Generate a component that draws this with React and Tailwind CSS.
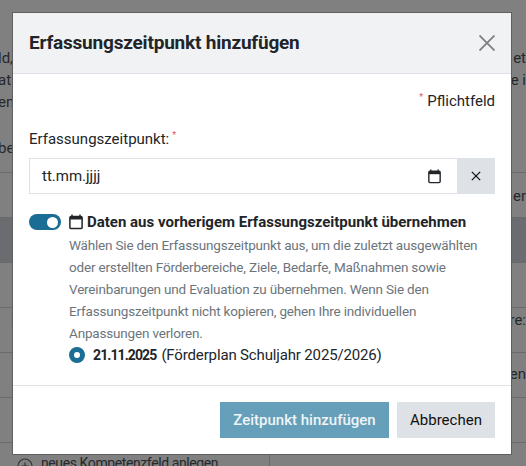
const CalendarIcon = ({ className }) => (
  <svg viewBox="0 0 14 16" className={className} fill="none">
    <path d="M3 0.5v2M11 0.5v2" stroke="#212529" strokeWidth="1.4" />
    <rect x="0.9" y="2.4" width="12.2" height="12.2" rx="1.2" stroke="#212529" strokeWidth="1.5" />
    <rect x="1" y="2.5" width="12" height="3" fill="#212529" />
  </svg>
);

// Seite hinter dem Dialog
const Background = () => (
  <div className="h-[466px] w-[526px] overflow-hidden bg-[#808080] text-[15px] leading-[22px] text-[#26282b]">
    <div className="h-[173px] border-b border-[#6a6a6a]">
      <div className="flex justify-between pt-[47px]">
        <div className="-ml-[2px]">ld,<br />at<br />en</div>
        <div className="text-right">et<br />e i</div>
      </div>
      <div className="-ml-[2px] pt-[24px]">be</div>
    </div>
    <div className="flex h-[45px] justify-end border-b border-[#6a6a6a] pt-[12px]">
      <span>er</span>
    </div>
    <div className="h-[45px] border-b border-[#6a6a6a] bg-[#6b6c6f]" />
    <div className="h-[45px] border-b border-[#6a6a6a]" />
    <div className="flex h-[45px] justify-between border-b border-[#6a6a6a] pt-[1px]">
      <span className="pl-[11px]">l</span>
      <span>re:</span>
    </div>
    <div className="flex h-[45px] justify-end border-b border-[#6a6a6a] pt-[10px]">gen</div>
    <div className="h-[45px] border-b border-[#6a6a6a]" />
    <div className="flex h-[24px] w-[270px] items-start gap-2 border-r border-[#6a6a6a] pl-[17px] pt-[9px] text-[14px] tracking-[-0.4px]">
      <svg viewBox="0 0 16 16" className="mt-[6px] h-4 w-4 shrink-0" fill="none" stroke="#333" strokeWidth="1.2">
        <circle cx="8" cy="8" r="7" />
        <path d="M8 4.5v7M4.5 8h7" />
      </svg>
      <span>neues Kompetenzfeld anlegen</span>
    </div>
  </div>
);

export default function App() {
  return (
    <div className="relative h-[466px] w-[526px] overflow-hidden font-['Roboto',sans-serif]">
      <Background />

      {/* Dialog */}
      <div className="absolute left-[13px] top-[13px] flex h-[441px] w-[498px] flex-col bg-white shadow-[0_0_0_1px_#5f5f5f]">
        <div className="flex h-[61px] shrink-0 items-center justify-between border-b border-[#dee2e6] bg-[#f1f2f4] pl-4 pr-[15px]">
          <h2 className="text-[19px] font-bold tracking-[-0.2px] text-[#212529]">Erfassungszeitpunkt hinzufügen</h2>
          <svg viewBox="0 0 16 16" className="h-4 w-4 mr-[1px]" fill="none" stroke="#7f7f7f" strokeWidth="1.8">
            <path d="M0.5 0.5l15 15M15.5 0.5l-15 15" />
          </svg>
        </div>

        <div className="flex flex-1 flex-col px-4 pt-[16px]">
          <div className="flex justify-end gap-[4px] text-[15px] leading-[22px] text-[#212529]">
            <span className="text-[9px] leading-[14px] text-[#e0566a]">*</span>
            <span>Pflichtfeld</span>
          </div>

          <label className="mt-[16px] flex gap-[3px] text-[15px] leading-[22px] text-[#212529]">
            <span>Erfassungszeitpunkt:</span>
            <span className="text-[9px] leading-[14px] text-[#e0566a]">*</span>
          </label>

          <div className="mt-[8px] flex h-[36px]">
            <div className="flex flex-1 items-center justify-between border border-r-0 border-[#dee2e6] pl-3 pr-[16px] text-[15px] text-[#212529]">
              <span>tt.mm.jjjj</span>
              <CalendarIcon className="h-[15px] w-[13px]" />
            </div>
            <button className="flex w-[38px] items-center justify-center bg-[#dee2e6]">
              <svg viewBox="0 0 12 12" className="h-[10px] w-[10px]" fill="none" stroke="#111" strokeWidth="1.5">
                <path d="M1 1l10 10M11 1L1 11" />
              </svg>
            </button>
          </div>

          <div className="mt-[19px] flex items-start gap-2">
            <div className="mt-px flex h-4 w-8 shrink-0 items-center justify-end rounded-full bg-[#1a6e96] pr-[3px]">
              <div className="h-[11px] w-[11px] rounded-full bg-white" />
            </div>
            <div className="min-w-0">
              <div className="flex items-center gap-[4px] text-[15px] font-bold leading-[18px] text-[#212529]">
                <CalendarIcon className="h-4 w-[14px]" />
                <span>Daten aus vorherigem Erfassungszeitpunkt übernehmen</span>
              </div>
              <p className="mt-[3px] whitespace-nowrap text-[13.5px] leading-[22px] tracking-[-0.18px] text-[#6c757d]">
                Wählen Sie den Erfassungszeitpunkt aus, um die zuletzt ausgewählten<br />
                oder erstellten Förderbereiche, Ziele, Bedarfe, Maßnahmen sowie<br />
                Vereinbarungen und Evaluation zu übernehmen. Wenn Sie den<br />
                Erfassungszeitpunkt nicht kopieren, gehen Ihre individuellen<br />
                Anpassungen verloren.
              </p>
              <div className="flex items-center gap-[8px] text-[15px] leading-[22px] tracking-[-0.15px] text-[#212529]">
                <span className="h-4 w-4 rounded-full border-[5px] border-[#1a6e96] bg-white" />
                <span className="flex gap-[5px]">
                  <b className="text-[14px] tracking-[-0.9px]">21.11.2025</b>
                  <span>(Förderplan Schuljahr 2025/2026)</span>
                </span>
              </div>
            </div>
          </div>
        </div>

        <div className="flex h-[69px] shrink-0 items-start justify-end gap-2 border-t border-[#dee2e6] px-4 pt-[16px]">
          <button className="h-9 w-[169px] bg-[#669fb9] text-[15px] font-medium text-[#eef4f7]">Zeitpunkt hinzufügen</button>
          <button className="h-9 w-[98px] bg-[#dee2e6] text-[15px] text-[#111]">Abbrechen</button>
        </div>
      </div>
    </div>
  );
}
